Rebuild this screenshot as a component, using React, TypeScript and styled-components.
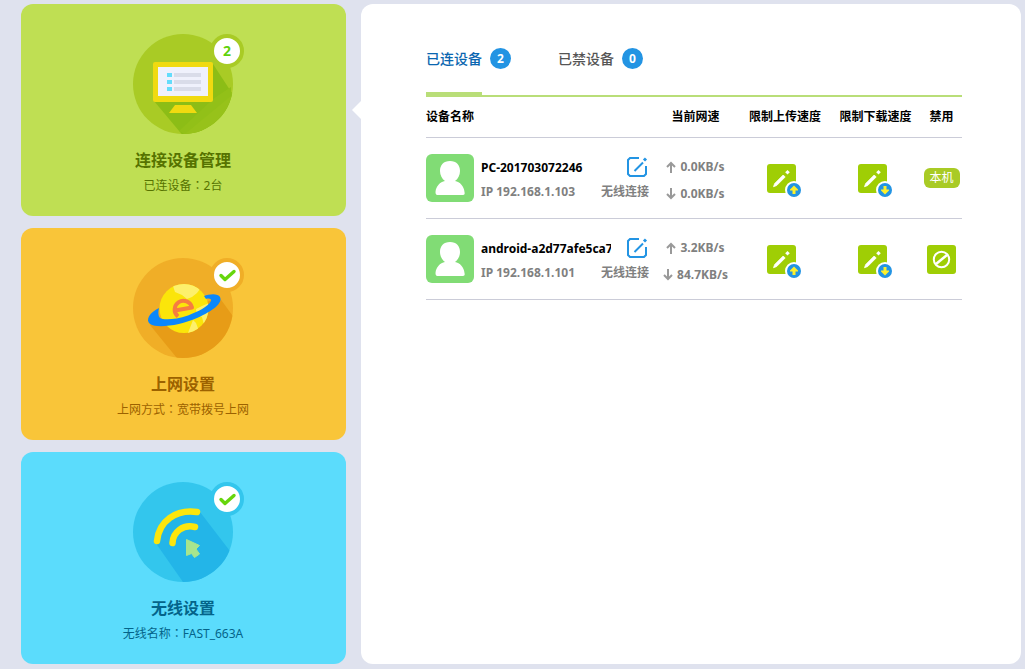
import React from "react";
import styled, { createGlobalStyle } from "styled-components";

const GlobalStyle = createGlobalStyle`
  *, *::before, *::after { box-sizing: border-box; }
  body {
    margin: 0;
    background: #dfe2ee;
    font-family: "Noto Sans", "Noto Sans CJK SC", sans-serif;
    font-size: 12px;
    line-height: 18px;
    color: #000;
  }
  button { font: inherit; color: inherit; border: 0; padding: 0; background: none; cursor: pointer; }
  svg { display: block; }
`;

const Page = styled.div`
  display: flex;
  gap: 15px;
  min-height: 100vh;
  padding: 4px 4px 5px 21px;
`;

const Sidebar = styled.nav`
  flex: 0 0 325px;
  display: flex;
  flex-direction: column;
  gap: 12px;
`;

const Card = styled.button<{ $bg: string; $ink: string }>`
  display: flex;
  flex-direction: column;
  align-items: center;
  width: 100%;
  padding: 30px 17px 20px 16px;
  border-radius: 12px;
  background: ${(p) => p.$bg};
  color: ${(p) => p.$ink};
`;

const CardIcon = styled.div`
  position: relative;
  width: 100px;
  height: 100px;
`;

const CardBadge = styled.span<{ $ring: string }>`
  position: absolute;
  top: 0;
  right: -11px;
  display: flex;
  align-items: center;
  justify-content: center;
  width: 34px;
  height: 34px;
  border: 4px solid ${(p) => p.$ring};
  border-radius: 50%;
  background: #fff;
  color: #5fd20a;
  font-size: 14px;
  font-weight: 700;
`;

const CardTitle = styled.span`
  margin-top: 14px;
  font-size: 16px;
  line-height: 24px;
  font-weight: 700;
`;

const CardInfo = styled.span`
  margin-top: 4px;
  line-height: 20px;
`;

const Colon = styled.span`
  font-family: "Noto Sans CJK TC", sans-serif;
  line-height: 1;
`;

const Panel = styled.main`
  position: relative;
  flex: 1;
  min-width: 0;
  padding: 40px 59px 40px 65px;
  border-radius: 12px;
  background: #fff;

  &::before {
    content: "";
    position: absolute;
    top: 97px;
    left: -9px;
    border: 9px solid transparent;
    border-left-width: 0;
    border-right-color: #fff;
  }
`;

const Tabs = styled.div`
  display: flex;
  gap: 47px;
  border-bottom: 2px solid #b9de78;
`;

const Tab = styled.button<{ $active?: boolean }>`
  display: flex;
  align-items: flex-start;
  gap: 8px;
  height: 51px;
  font-size: 14px;
  line-height: 30px;
  font-weight: 500;
  color: ${(p) => (p.$active ? "#0a66b0" : "#555")};
`;

const TabLabel = styled.span<{ $active?: boolean }>`
  height: 51px;
  border-bottom: 3px solid ${(p) => (p.$active ? "#b9de78" : "transparent")};
`;

const Count = styled.span`
  width: 21px;
  height: 21px;
  margin-top: 4px;
  border-radius: 50%;
  background: #2394e3;
  color: #fff;
  font-size: 12px;
  line-height: 21px;
  font-weight: 700;
  text-align: center;
`;

const Table = styled.table`
  width: 100%;
  table-layout: fixed;
  border-collapse: separate;
  border-spacing: 0;
`;

const HeadCell = styled.th<{ $width?: number; $left?: boolean }>`
  width: ${(p) => (p.$width ? p.$width + "px" : "auto")};
  height: 41px;
  padding: 0;
  border-bottom: 1px solid #cbccd8;
  text-align: ${(p) => (p.$left ? "left" : "center")};
  white-space: nowrap;
`;

const Cell = styled.td<{ $drop?: number }>`
  height: 81px;
  padding: ${(p) => p.$drop || 0}px 0 0;
  border-bottom: 1px solid #cbccd8;
  text-align: center;
`;

const Device = styled.div`
  display: flex;
  align-items: center;
  gap: 7px;
  padding-right: 2px;
`;

const DeviceText = styled.div`
  flex: 1;
  min-width: 0;
  padding-top: 3px;
  text-align: left;
  font-weight: 700;
`;

const DeviceLine = styled.div`
  display: flex;
  align-items: center;
  justify-content: space-between;
  height: 24px;
  color: #808080;
`;

const DeviceName = styled.span`
  width: 130px;
  overflow: hidden;
  white-space: nowrap;
  color: #000;
`;

const Speeds = styled.div`
  display: flex;
  flex-direction: column;
  gap: 9px;
  color: #808080;
  font-weight: 700;
`;

const Speed = styled.div`
  display: flex;
  align-items: center;
  justify-content: center;
  gap: 4px;
`;

const IconButton = styled.button`
  display: inline-block;
  vertical-align: middle;
`;

const EditButton = styled(IconButton)`
  margin-right: 1px;
`;

const Local = styled.span`
  display: inline-block;
  width: 36px;
  height: 20px;
  border-radius: 6px;
  background: #a9cb25;
  color: #fff;
  line-height: 19px;
  vertical-align: middle;
`;

const Check = () => (
  <svg width="26" height="26" viewBox="0 0 26 26" aria-hidden="true">
    <path d="M7 13.5 11 17.5 20 9.5" fill="none" stroke="#66d60c" strokeWidth="3.4" strokeLinecap="round" strokeLinejoin="round" />
  </svg>
);

const MonitorArt = () => (
  <svg width="100" height="100" viewBox="0 0 100 100" aria-hidden="true">
    <clipPath id="disc-a"><circle cx="50" cy="50" r="50" /></clipPath>
    <circle cx="50" cy="50" r="50" fill="#a9cb25" />
    <g clipPath="url(#disc-a)">
      <path d="M80 30 110 76V110H57L21 67Z" fill="#8cbd16" />
      <path d="M98 58 50 100V110H110V65Z" fill="#97c21a" />
      <path d="M80 65 98 53V62L52 100 46 97Z" fill="#92c018" />
    </g>
    <rect x="20" y="28" width="60" height="40" rx="2" fill="#f0da10" />
    <rect x="25" y="33" width="50" height="29" fill="#eff1fc" />
    <path d="M34 39h5v4h-5zM34 46h5v4h-5zM34 53h5v4h-5z" fill="#63dcfb" />
    <path d="M41 39h27v4H41zM41 46h27v4H41zM41 53h27v4H41z" fill="#d9dce9" />
    <path d="M42 71h16l6 8H36z" fill="#f0da10" />
  </svg>
);

const PlanetArt = () => (
  <svg width="100" height="100" viewBox="0 0 100 100" aria-hidden="true">
    <clipPath id="disc-b"><circle cx="50" cy="50" r="50" /></clipPath>
    <clipPath id="globe"><circle cx="51" cy="50.5" r="24.5" /></clipPath>
    <circle cx="50" cy="50" r="50" fill="#f0ae27" />
    <path d="M86 39 110 72V110H52L17 67Z" fill="#e79c17" clipPath="url(#disc-b)" />
    <circle cx="51" cy="50.5" r="24.5" fill="#fbe50a" />
    <g clipPath="url(#globe)" fill="#fdf06c">
      <path d="M39 25 42 34 49 37 54 41 59 39 64 35 67 31 56 25Z" />
      <path d="M69 48 76 45V62L71 67 69 59 64 57 63 51Z" />
      <path d="M60 62 55 75 66 73 63 65Z" />
    </g>
    <path d="M42 52.500 59 49.500A8.800 8.800 0 1 0 45 58.500" fill="none" stroke="#f67d41" strokeWidth="4" strokeLinejoin="round" />
    <path d="M26 50C17 54 12 62 17 66 25 71 48 67 64 60 80 53 90 45 87 39 85 35 76 36 71 38L73 41C76 40 79 41 78 43 75 49 64 54 55 57.500 42 62 30 62 27 60 25 58 25 54 26 50Z" fill="#0b87fb" />
  </svg>
);

const WifiArt = () => (
  <svg width="100" height="100" viewBox="0 0 100 100" aria-hidden="true">
    <clipPath id="disc-c"><circle cx="50" cy="50" r="50" /></clipPath>
    <circle cx="50" cy="50" r="50" fill="#33c6ed" />
    <path d="M67 30 110 86V110H57L22 60 29 45 44 32Z" fill="#23b5e8" clipPath="url(#disc-c)" />
    <g fill="none" stroke="#fce60c" strokeWidth="6.500" strokeLinecap="round">
      <path d="M24 59C26 39 43 27 64 30" />
      <path d="M39.500 61C40 50 50 42 62 45" />
    </g>
    <path d="M53.500 57.500 66.500 63.500 63 67 66.500 72 61.500 75.500 58.500 71.500 53.500 73.500Z" fill="#a7e58d" stroke="#a7e58d" strokeLinejoin="round" />
  </svg>
);

const Avatar = () => (
  <svg width="48" height="48" viewBox="0 0 48 48" aria-hidden="true">
    <rect width="48" height="48" rx="6" fill="#81dc75" />
    <path d="M24 7C17.500 7 14 11 14 17 14 21 16 25 19 27 14 28 10 32 9.500 38 9.500 40 10 41 11.500 41H37C38.500 41 39 40 38.500 38 38 32 34 28 29 27 32 25 34 21 34 17 34 11 30.500 7 24 7Z" fill="#fff" />
  </svg>
);

const EditIcon = () => (
  <svg width="21" height="21" viewBox="0 0 21 21" fill="none" stroke="#2394e3" strokeWidth="2" aria-hidden="true">
    <path d="M12 1H3L1 3V17L3 19H17L19 17V9" />
    <path d="M7.500 14 16 5.500" />
    <path d="M17 3.500 19 1.500" strokeWidth="3" />
  </svg>
);

const Arrow = ({ down }: { down?: boolean }) => (
  <svg width="10" height="12" viewBox="0 0 10 12" fill="none" stroke="#999" strokeWidth="2" aria-hidden="true">
    <path d={down ? "M5 0V10M1 6 5 10 9 6" : "M5 12V2M1 6 5 2 9 6"} />
  </svg>
);

const LimitIcon = ({ down }: { down?: boolean }) => (
  <svg width="36" height="34" viewBox="0 0 36 34" aria-hidden="true">
    <rect width="29" height="29" rx="3" fill="#9fce05" />
    <path d="M6.500 22.700 7.700 19.500 16.200 11 18.200 13 9.700 21.500Z" fill="#fff" stroke="#fff" strokeWidth="0.800" strokeLinejoin="round" />
    <path d="M20.500 6 22.800 8.300 20.500 10.600 18.200 8.300Z" fill="#fff" />
    <circle cx="27" cy="26" r="9" fill="#fff" />
    <circle cx="27" cy="26" r="7" fill="#2394e3" />
    <path d={down ? "M25.500 22H28.500V25.500H31V26.500L27 30.500 23 26.500V25.500H25.500Z" : "M25.500 30H28.500V26.500H31V25.500L27 21.500 23 25.500V26.500H25.500Z"} fill="#fdf02c" />
  </svg>
);

const BanIcon = () => (
  <svg width="29" height="29" viewBox="0 0 29 29" aria-hidden="true">
    <rect width="29" height="29" rx="3" fill="#9fce05" />
    <g fill="none" stroke="#fff" strokeWidth="2">
      <circle cx="14.500" cy="14.500" r="7.700" />
      <path d="M9 19 20 10" strokeWidth="2.500" />
    </g>
  </svg>
);

const cards = [
  { title: "连接设备管理", label: "已连设备", value: "2台", bg: "#bfdf53", ring: "#a9cb25", ink: "#567300", art: <MonitorArt />, badge: "2" },
  { title: "上网设置", label: "上网方式", value: "宽带拨号上网", bg: "#f9c539", ring: "#f0ae27", ink: "#9c6200", art: <PlanetArt />, badge: <Check /> },
  { title: "无线设置", label: "无线名称", value: "FAST_663A", bg: "#5bdcfc", ring: "#33c6ed", ink: "#04648a", art: <WifiArt />, badge: <Check /> },
];

const devices = [
  { name: "PC-201703072246", ip: "192.168.1.103", up: "0.0KB/s", down: "0.0KB/s", local: true },
  { name: "android-a2d77afe5ca7", ip: "192.168.1.101", up: "3.2KB/s", down: "84.7KB/s", local: false },
];

export default function App() {
  return (
    <>
      <GlobalStyle />
      <Page>
        <Sidebar>
          {cards.map((c) => (
            <Card key={c.title} $bg={c.bg} $ink={c.ink}>
              <CardIcon>
                {c.art}
                <CardBadge $ring={c.ring}>{c.badge}</CardBadge>
              </CardIcon>
              <CardTitle>{c.title}</CardTitle>
              <CardInfo>{c.label}<Colon>：</Colon>{c.value}</CardInfo>
            </Card>
          ))}
        </Sidebar>
        <Panel>
          <Tabs role="tablist">
            <Tab role="tab" aria-selected="true" $active>
              <TabLabel $active>已连设备</TabLabel>
              <Count>2</Count>
            </Tab>
            <Tab role="tab" aria-selected="false">
              <TabLabel>已禁设备</TabLabel>
              <Count>0</Count>
            </Tab>
          </Tabs>
          <Table>
            <thead>
              <tr>
                <HeadCell $left>设备名称</HeadCell>
                <HeadCell $width={89}>当前网速</HeadCell>
                <HeadCell $width={90}>限制上传速度</HeadCell>
                <HeadCell $width={91}>限制下载速度</HeadCell>
                <HeadCell $width={41}>禁用</HeadCell>
              </tr>
            </thead>
            <tbody>
              {devices.map((d) => (
                <tr key={d.name}>
                  <Cell>
                    <Device>
                      <Avatar />
                      <DeviceText>
                        <DeviceLine>
                          <DeviceName>{d.name}</DeviceName>
                          <EditButton aria-label="编辑"><EditIcon /></EditButton>
                        </DeviceLine>
                        <DeviceLine>
                          <span>IP {d.ip}</span>
                          <span>无线连接</span>
                        </DeviceLine>
                      </DeviceText>
                    </Device>
                  </Cell>
                  <Cell $drop={5}>
                    <Speeds>
                      <Speed><Arrow />{d.up}</Speed>
                      <Speed><Arrow down />{d.down}</Speed>
                    </Speeds>
                  </Cell>
                  <Cell $drop={5}><IconButton aria-label="限制上传速度"><LimitIcon /></IconButton></Cell>
                  <Cell $drop={5}><IconButton aria-label="限制下载速度"><LimitIcon down /></IconButton></Cell>
                  <Cell>
                    {d.local ? <Local>本机</Local> : <IconButton aria-label="禁用"><BanIcon /></IconButton>}
                  </Cell>
                </tr>
              ))}
            </tbody>
          </Table>
        </Panel>
      </Page>
    </>
  );
}
